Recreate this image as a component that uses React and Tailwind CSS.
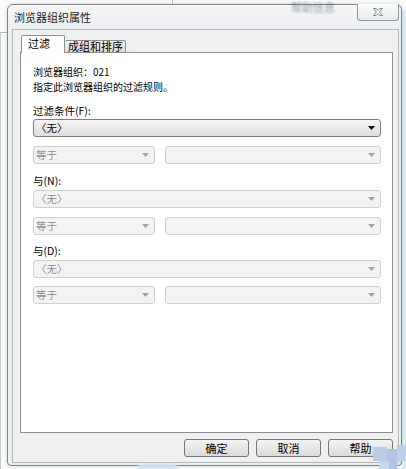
import React from 'react';

const cjk = "font-['Noto_Sans_CJK_SC',sans-serif]";

const Arrow = ({ disabled }) => (
  <svg width="7" height="4" viewBox="0 0 7 4">
    <path d="M0 0h7L3.5 4z" fill={disabled ? '#a3a3a3' : '#000'} />
  </svg>
);

const Combo = ({ text, disabled, className = '' }) => (
  <div
    className={`flex h-[18px] items-center justify-between rounded-[3px] border pl-[2px] pr-[5px] text-[10.5px] leading-none ${
      disabled
        ? 'border-[#d0d0d0] bg-[#f3f3f3] text-[#8f8f8f]'
        : 'border-[#7d7d7d] bg-gradient-to-b from-[#f4f4f4] to-[#dfdfdf] text-black'
    } ${className}`}
  >
    <span>{text}</span>
    <Arrow disabled={disabled} />
  </div>
);

const Row = () => (
  <div className="flex gap-[10px]">
    <Combo text="等于" disabled className="w-[122px]" />
    <Combo text="" disabled className="flex-1" />
  </div>
);

const Button = ({ children }) => (
  <button className="h-[18px] w-[65px] rounded-[3px] border border-[#767676] bg-gradient-to-b from-[#f4f4f4] to-[#dadada] text-[11px] leading-none text-black">
    {children}
  </button>
);

const CloseIcon = () => (
  <svg width="12" height="10" viewBox="0 0 12 10">
    <path
      d="M1.5 1.5h2.6L6 3.4 7.9 1.5h2.6L7.6 5l2.9 3.5H7.9L6 6.6 4.1 8.5H1.5L4.4 5z"
      fill="#fff"
      stroke="#7f868b"
      strokeWidth="1"
      strokeLinejoin="round"
    />
  </svg>
);

export default function App() {
  return (
    <div className={`relative h-[469px] w-[406px] overflow-hidden bg-[#f9fafa] pl-[7px] pt-[4px] ${cjk}`}>
      {/* things behind the dialog */}
      <div className="absolute left-0 top-[32px] h-px w-[8px] bg-[#b5b5b5]" />
      <div className="absolute left-[172px] top-0 h-[5px] w-px bg-[#c8c8c8]" />
      <div className="absolute left-0 top-[33px] h-[436px] w-[7px] border-l border-[#c9c9c9] bg-[#fbfbfb]" />
      <div className="absolute left-[402px] top-[10px] h-[459px] w-[4px] bg-[#dcf0f4]" />

      {/* dialog */}
      <div className="relative flex h-[462px] w-[395px] flex-col rounded-t-[6px] rounded-b-[4px] border border-[#7d8589] bg-[#e9f1f3] shadow-[0_0_4px_rgba(0,0,0,0.15)]">
        {/* title bar */}
        <div className="relative flex h-[24px] items-center rounded-t-[6px] bg-gradient-to-b from-[#f3f5f6] to-[#eceff1] pl-[6px]">
          <span className="text-[11px] leading-none text-[#1e1e1e]">浏览器组织属性</span>
          <span className="absolute left-[283px] top-[-6px] text-[11px] text-[#5a6470] opacity-60 blur-[1px]">帮助信息</span>
          <div className="absolute right-[2px] top-[-1px] flex h-[17px] w-[42px] items-center justify-center rounded-b-[4px] border border-t-0 border-[#8e979c] bg-gradient-to-b from-[#fafbfb] to-[#e8ecee]">
            <CloseIcon />
          </div>
        </div>

        {/* client area */}
        <div className="mb-[2px] ml-[4px] mr-[2px] flex flex-1 flex-col border border-[#b4b9bc] bg-[#f0f0f0]">
          <div className="ml-[7px] mr-[5px] mt-[5px] flex flex-1 flex-col">
            {/* tabs */}
            <div className="flex h-[18px] items-end pl-[1px]">
              <div className="relative z-10 flex h-[18px] w-[44px] items-start rounded-t-[2px] border border-b-0 border-[#8c8e94] bg-white pl-[6px] pt-[2px] text-[11px] leading-none text-black">
                过滤
              </div>
              <div className="mb-px flex h-[12px] w-[61px] items-center rounded-t-[2px] border border-b-0 border-l-0 border-[#8c8e94] bg-gradient-to-b from-[#f2f2f2] to-[#dcdcdc] pl-[3px] text-[11px] leading-none text-black">
                成组和排序
              </div>
            </div>

            {/* tab panel */}
            <div className="-mt-px h-[381px] border border-[#8c8e94] bg-white pl-[12px] pr-[11px] pt-[12px] text-[10.5px] text-black">
              <div className="h-[14.5px] text-[10px] leading-[14.5px]">浏览器组织：021</div>
              <div className="h-[14.5px] text-[10px] leading-[14.5px]">指定此浏览器组织的过滤规则。</div>

              <div className="mt-[10px] h-[14px] leading-[14px]">过滤条件(F):</div>
              <Combo text="〈无〉" className="mt-px" />
              <div className="mt-[9px]">
                <Row />
              </div>

              <div className="mt-[10px] h-[14px] leading-[14px]">与(N):</div>
              <Combo text="〈无〉" disabled className="mt-[2px]" />
              <div className="mt-[9px]">
                <Row />
              </div>

              <div className="mt-[9px] h-[14px] leading-[14px]">与(D):</div>
              <Combo text="〈无〉" disabled className="mt-[2px]" />
              <div className="mt-[8px]">
                <Row />
              </div>
            </div>

            {/* buttons */}
            <div className="mt-[6px] flex justify-end gap-[7px]">
              <Button>确定</Button>
              <Button>取消</Button>
              <Button>帮助</Button>
            </div>
          </div>
        </div>
      </div>

      {/* blurred watermark blobs */}
      <div className="absolute left-[137px] top-[464px] h-[5px] w-[40px] rounded-full bg-[#cfe2f5] blur-[1px]" />
      <div className="absolute left-[373px] top-[443px] h-[26px] w-[33px]">
        <div className="absolute left-0 top-[4px] h-[14px] w-[14px] bg-[#b9cde6]" />
        <div className="absolute left-[14px] top-[6px] h-[20px] w-[10px] bg-[#aec4e2]" />
        <div className="absolute left-[24px] top-[2px] h-[16px] w-[9px] bg-[#bcd0e8]" />
        <div className="absolute left-[6px] top-[18px] h-[8px] w-[10px] bg-[#c6d7ec]" />
      </div>
    </div>
  );
}
